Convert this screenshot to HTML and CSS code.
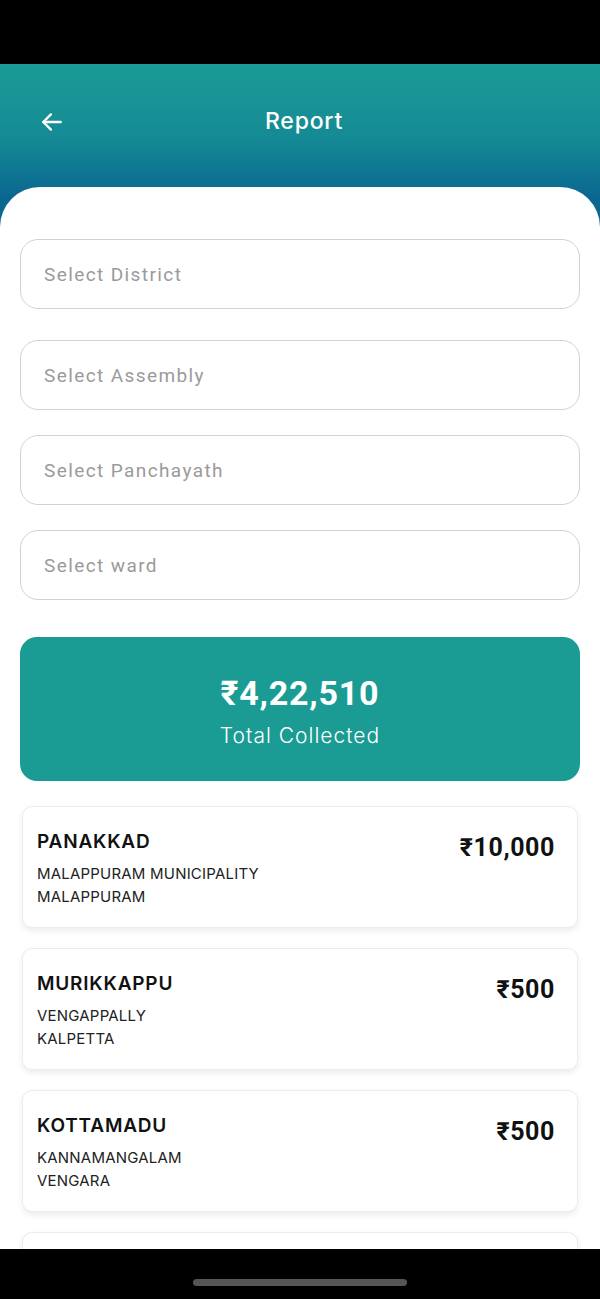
FILE: index.html
```html
<!DOCTYPE html>
<html lang="en">
<head>
    <meta charset="UTF-8">
    <meta name="viewport" content="width=device-width, initial-scale=1">
    <title>Report</title>
    <link rel="stylesheet" href="styles.css">
</head>
<body>
    <div class="status-bar"></div>

    <main class="screen">
        <header class="top-bar">
            <button class="back-btn" aria-label="Back">
                <svg width="26" height="26" viewBox="0 0 24 24" fill="none" stroke="#fff" stroke-width="2.2" stroke-linecap="round" stroke-linejoin="round">
                    <line x1="20" y1="12" x2="4" y2="12"/>
                    <polyline points="11 5 4 12 11 19"/>
                </svg>
            </button>
            <h1>Report</h1>
        </header>

        <section class="sheet">
            <div class="field first">Select District</div>
            <div class="field">Select Assembly</div>
            <div class="field">Select Panchayath</div>
            <div class="field">Select ward</div>

            <div class="total-card">
                <div class="total-amount">₹4,22,510</div>
                <div class="total-label">Total Collected</div>
            </div>

            <div class="ward-list">
                <div class="ward-card">
                    <div class="ward-info">
                        <div class="ward-name">PANAKKAD</div>
                        <div class="ward-sub">MALAPPURAM MUNICIPALITY</div>
                        <div class="ward-sub">MALAPPURAM</div>
                    </div>
                    <div class="ward-amount">₹10,000</div>
                </div>
                <div class="ward-card">
                    <div class="ward-info">
                        <div class="ward-name">MURIKKAPPU</div>
                        <div class="ward-sub">VENGAPPALLY</div>
                        <div class="ward-sub">KALPETTA</div>
                    </div>
                    <div class="ward-amount">₹500</div>
                </div>
                <div class="ward-card">
                    <div class="ward-info">
                        <div class="ward-name">KOTTAMADU</div>
                        <div class="ward-sub">KANNAMANGALAM</div>
                        <div class="ward-sub">VENGARA</div>
                    </div>
                    <div class="ward-amount">₹500</div>
                </div>
                <div class="ward-card">
                    <div class="ward-info">
                        <div class="ward-name">&nbsp;</div>
                    </div>
                </div>
            </div>
        </section>
    </main>

    <div class="nav-bar">
        <div class="home-indicator"></div>
    </div>
</body>
</html>
```

FILE: styles.css
```css
* {
    box-sizing: border-box;
}

html, body {
    margin: 0;
    padding: 0;
}

body {
    width: 600px;
    height: 1299px;
    display: flex;
    flex-direction: column;
    overflow: hidden;
    background-color: #000;
    font-family: "Inter", "Noto Sans", sans-serif;
}

.status-bar {
    height: 64px;
    flex: none;
    background-color: #000;
}

.screen {
    flex: 1;
    overflow: hidden;
    background-color: #fff;
}

.top-bar {
    height: 166px;
    padding: 0 0 43px;
    display: flex;
    align-items: center;
    justify-content: center;
    position: relative;
    background: linear-gradient(180deg, #1a9b95 0%, #148a95 45%, #0a6790 80%, #0a6790 100%);
}

.top-bar h1 {
    margin: 0 0 10px;
    color: #fff;
    font-size: 23px;
    font-weight: 500;
    letter-spacing: 0.8px;
    transform: translateX(4px);
}

.back-btn {
    position: absolute;
    left: 38px;
    top: 45px;
    background: none;
    border: none;
    padding: 0;
    width: 28px;
    height: 28px;
    cursor: pointer;
}

.sheet {
    margin-top: -43px;
    background-color: #fff;
    border-radius: 40px 40px 0 0;
    padding: 52px 20px 0;
    position: relative;
}

.field {
    height: 70px;
    border: 1px solid #d2d2d2;
    border-radius: 18px;
    padding: 0 23px;
    display: flex;
    align-items: center;
    margin-bottom: 25px;
    color: #9a9a9a;
    font-family: "Roboto", "Noto Sans", sans-serif;
    font-size: 19px;
    letter-spacing: 1.4px;
}

.field.first {
    margin-bottom: 31px;
}

.total-card {
    margin-top: 37px;
    height: 144px;
    background-color: #1a9c94;
    border-radius: 17px;
    display: flex;
    flex-direction: column;
    align-items: center;
    justify-content: center;
    color: #fff;
}

.total-amount {
    font-family: "Roboto", "Noto Sans", sans-serif;
    font-size: 34px;
    font-weight: 700;
    letter-spacing: 0.8px;
    margin-bottom: 10px;
    margin-top: 2px;
}

.total-label {
    font-size: 21px;
    font-weight: 300;
    letter-spacing: 1px;
}

.ward-list {
    margin-top: 25px;
    display: flex;
    flex-direction: column;
    gap: 20px;
    padding: 0 2px;
}

.ward-card {
    height: 122px;
    background-color: #fff;
    border-radius: 10px;
    border: 1px solid #ececec;
    box-shadow: 0 3px 6px rgba(0, 0, 0, 0.08);
    padding: 23px 22px 0 14px;
    display: flex;
    justify-content: space-between;
    align-items: flex-start;
}

.ward-name {
    font-size: 19px;
    font-weight: 600;
    letter-spacing: 0.8px;
    color: #111;
    margin-bottom: 9px;
}

.ward-sub {
    font-size: 15px;
    line-height: 23px;
    color: #222;
    letter-spacing: 0.2px;
}

.ward-amount {
    font-family: "Roboto", "Noto Sans", sans-serif;
    font-size: 25px;
    font-weight: 700;
    color: #111;
    margin-top: 3px;
    letter-spacing: 0.6px;
}

.nav-bar {
    height: 50px;
    flex: none;
    background-color: #000;
    display: flex;
    justify-content: center;
    align-items: flex-start;
    padding-top: 30px;
}

.home-indicator {
    width: 214px;
    height: 7px;
    border-radius: 4px;
    background-color: #555;
}
```
